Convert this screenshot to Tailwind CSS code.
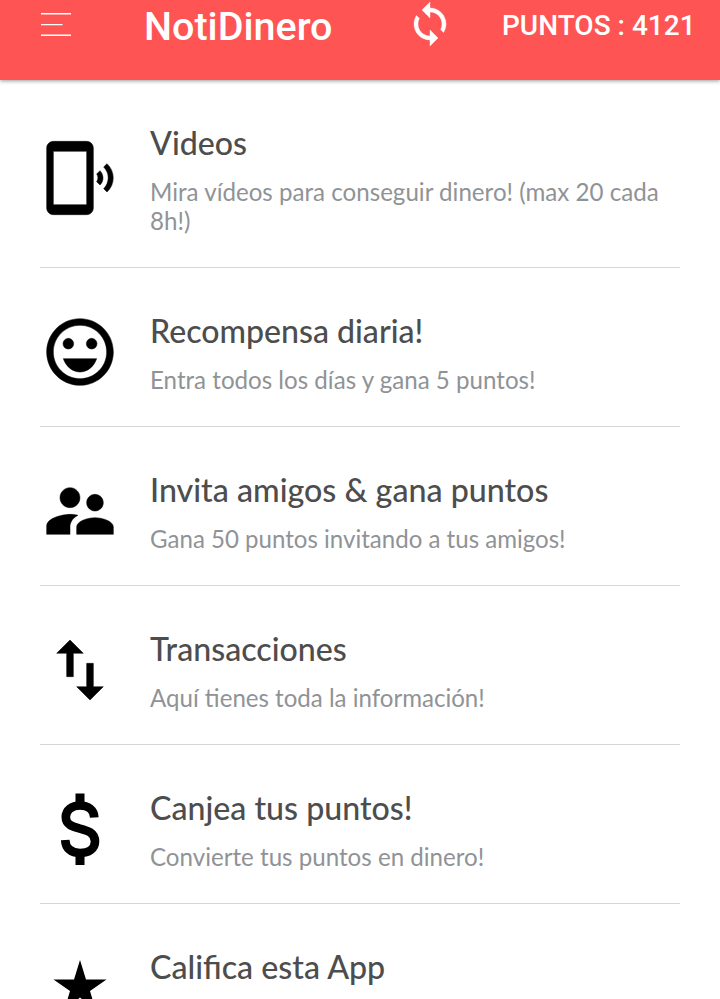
<!DOCTYPE html>
<html lang="es">

<head>
    <meta charset="UTF-8">
    <meta name="viewport" content="width=device-width, initial-scale=1.0">
    <title>NotiDinero</title>
    <script src="https://cdn.jsdelivr.net/npm/@tailwindcss/browser@4"></script>
</head>

<body class="h-[999px] overflow-hidden bg-white font-['Lato','Noto_Sans',sans-serif]">
    <!-- Header -->
    <header class="flex h-20 items-start bg-[#ff5454] font-['Roboto',sans-serif] font-medium text-white shadow-[0_1px_4px_rgba(0,0,0,0.4)]">
        <svg class="mt-3 ml-[41px] h-[25px] w-[30px] shrink-0" viewBox="0 0 30 25" fill="white">
            <path d="M0 1h30v1.5H0zM0 12h21.5v1.3H0zM0 22.5h30V24H0z" />
        </svg>
        <h1 class="ml-[73px] w-[255px] text-[39.5px] leading-[54px]">NotiDinero</h1>
        <svg class="ml-[7px] h-12 w-12 shrink-0 blur-[0.4px]" viewBox="0 0 24 24" fill="white" stroke="white" stroke-width="0.2">
            <path d="M12 4V1L8 5l4 4V6c3.31 0 6 2.69 6 6 0 1.01-.25 1.97-.7 2.8l1.46 1.46C19.54 15.03 20 13.57 20 12c0-4.42-3.58-8-8-8zm0 14c-3.31 0-6-2.69-6-6 0-1.01.25-1.97.7-2.8L5.24 7.74C4.46 8.97 4 10.43 4 12c0 4.42 3.58 8 8 8v3l4-4-4-4v3z" />
        </svg>
        <p class="ml-[48px] text-[28px] leading-[52px] whitespace-nowrap">PUNTOS : 4121</p>
    </header>

    <!-- Menu list -->
    <ul class="px-10">
        <li class="flex h-[188px] gap-[30px] border-b border-[#d6d6d6] pt-[42px]">
            <svg class="mt-4 h-20 w-20 shrink-0 blur-[0.5px]" viewBox="0 0 24 24" stroke="black" stroke-width="0.15">
                <path d="M20.1 7.7l-1 1c1.8 1.8 1.8 4.6 0 6.5l1 1c2.5-2.3 2.5-6.1 0-8.5zM18 9.8l-1 1c.5.7.5 1.6 0 2.3l1 1c1.2-1.2 1.2-3 0-4.3zM14 1H4c-1.1 0-2 .9-2 2v18c0 1.1.9 2 2 2h10c1.1 0 2-.9 2-2V3c0-1.1-.9-2-2-2zm0 19H4V4h10v16z" />
            </svg>
            <div>
                <h2 class="text-[32.15px] leading-[42px] font-medium text-[#4d4d4d]">Videos</h2>
                <p class="mt-[13px] text-[24.13px] leading-[29px] text-[#909396]">Mira vídeos para conseguir dinero! (max 20 cada 8h!)</p>
            </div>
        </li>
        <li class="flex h-[159px] gap-[30px] border-b border-[#d6d6d6] pt-[42px]">
            <svg class="mt-0.5 h-20 w-20 shrink-0 blur-[0.5px]" viewBox="0 0 24 24" stroke="black" stroke-width="0.15">
                <path d="M11.99 2C6.47 2 2 6.48 2 12s4.47 10 9.99 10C17.52 22 22 17.52 22 12S17.52 2 11.99 2zM12 20c-4.42 0-8-3.58-8-8s3.58-8 8-8 8 3.58 8 8-3.58 8-8 8z" />
                <circle cx="8.5" cy="9.5" r="1.6" />
                <circle cx="15.5" cy="9.5" r="1.6" />
                <path d="M12 18c2.28 0 4.22-1.66 5-4H7c.78 2.34 2.72 4 5 4z" />
            </svg>
            <div>
                <h2 class="text-[32.1px] leading-[42px] font-medium text-[#4d4d4d]">Recompensa diaria!</h2>
                <p class="mt-[13px] text-[24.13px] leading-[29px] text-[#909396]">Entra todos los días y gana 5 puntos!</p>
            </div>
        </li>
        <li class="flex h-[159px] gap-[30px] border-b border-[#d6d6d6] pt-[42px]">
            <svg class="mt-0.5 h-20 w-20 shrink-0 blur-[0.5px]" viewBox="0 0 24 24" stroke="black" stroke-width="0.15">
                <path d="M16.5 12c1.38 0 2.49-1.12 2.49-2.5S17.88 7 16.5 7C15.12 7 14 8.12 14 9.5s1.12 2.5 2.5 2.5zM9 11c1.66 0 2.99-1.34 2.99-3S10.66 5 9 5C7.34 5 6 6.34 6 8s1.34 3 3 3zm7.5 3c-1.83 0-5.5.92-5.5 2.75V19h11v-2.25c0-1.83-3.67-2.75-5.5-2.75zM9 13c-2.33 0-7 1.17-7 3.5V19h7v-2.25c0-.85.33-2.34 2.37-3.47C10.5 13.1 9.66 13 9 13z" />
            </svg>
            <div>
                <h2 class="text-[32.2px] leading-[42px] font-medium text-[#4d4d4d]">Invita amigos &amp; gana puntos</h2>
                <p class="mt-[13px] text-[24.07px] leading-[29px] text-[#909396]">Gana 50 puntos invitando a tus amigos!</p>
            </div>
        </li>
        <li class="flex h-[159px] gap-[30px] border-b border-[#d6d6d6] pt-[42px]">
            <svg class="mt-0.5 h-20 w-20 shrink-0 blur-[0.5px]" viewBox="0 0 24 24" stroke="black" stroke-width="0.15">
                <path d="M16 17.01V10h-2v7.01h-3L15 21l4-3.99h-3zM9 3L5 6.99h3V14h2V6.99h3L9 3z" />
            </svg>
            <div>
                <h2 class="text-[32.15px] leading-[42px] font-medium text-[#4d4d4d]">Transacciones</h2>
                <p class="mt-[13px] text-[24.07px] leading-[29px] text-[#909396]">Aquí tienes toda la información!</p>
            </div>
        </li>
        <li class="flex h-[159px] gap-[30px] border-b border-[#d6d6d6] pt-[42px]">
            <svg class="mt-0.5 h-20 w-20 shrink-0 blur-[0.5px]" viewBox="0 0 80 80" fill="none" stroke="black">
                <path stroke-width="9" d="M40 4.5v11M40 64.5v11.5" />
                <path stroke-width="8.6" d="M54.3 28.5C54 21 48 16.5 40 16.5S25.800 21 25.800 28C25.800 44 55 35 55 52.5C55 60 48.5 64 40 64S25.500 59.500 25.200 51" />
            </svg>
            <div>
                <h2 class="text-[32.15px] leading-[42px] font-medium text-[#4d4d4d]">Canjea tus puntos!</h2>
                <p class="mt-[13px] text-[24.13px] leading-[29px] text-[#909396]">Convierte tus puntos en dinero!</p>
            </div>
        </li>
        <li class="flex h-[95px] gap-[30px] overflow-hidden pt-[42px]">
            <svg class="mt-0.5 h-20 w-20 shrink-0 blur-[0.5px]" viewBox="0 0 80 80">
                <path d="M40 12l6 19.5h20.5L50 43l6 20-16-13.500-16 13.500 6-20L13.500 31.500H34z" />
            </svg>
            <div>
                <h2 class="text-[32.2px] leading-[42px] font-medium text-[#4d4d4d]">Califica esta App</h2>
            </div>
        </li>
    </ul>
</body>

</html>
